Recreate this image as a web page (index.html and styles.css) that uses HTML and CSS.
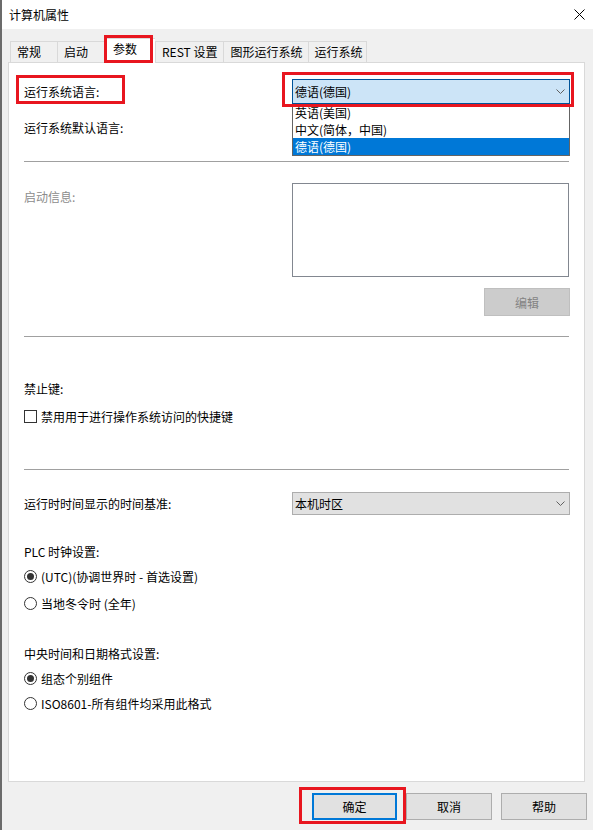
FILE: index.html
```html
<!DOCTYPE html>
<html lang="zh-CN">
<head>
<meta charset="utf-8">
<title>计算机属性</title>
<link rel="stylesheet" href="styles.css">
</head>
<body>
<div class="window">
  <div class="titlebar">
    <span class="title">计算机属性</span>
    <svg class="close" width="11" height="11" viewBox="0 0 11 11"><path d="M0.5 0.5 L10.5 10.5 M10.5 0.5 L0.5 10.5" stroke="#000" stroke-width="1" fill="none"/></svg>
  </div>

  <div class="tabs">
    <div class="tab">常规</div>
    <div class="tab">启动</div>
    <div class="tab active">参数<span class="mark mark-tab"></span></div>
    <div class="tab">REST 设置</div>
    <div class="tab">图形运行系统</div>
    <div class="tab last">运行系统</div>
  </div>

  <div class="panel">
    <div class="row row-lang">
      <span class="label">运行系统语言:</span>
      <div class="combo open">
        <span>德语(德国)</span>
        <svg class="chev" width="9" height="5" viewBox="0 0 9 5"><path d="M0.5 0.5 L4.5 4.5 L8.5 0.5" stroke="#606060" stroke-width="1" fill="none"/></svg>
        <ul class="droplist">
          <li>英语(美国)</li>
          <li>中文(简体，中国)</li>
          <li class="sel">德语(德国)</li>
        </ul>
      </div>
      <span class="mark mark-label"></span>
      <span class="mark mark-combo"></span>
    </div>
    <div class="row row-default">
      <span class="label">运行系统默认语言:</span>
    </div>

    <div class="sep sep-1"></div>

    <div class="startup">
      <span class="label disabled">启动信息:</span>
      <div class="textbox"></div>
    </div>
    <div class="edit-row">
      <button class="btn btn-disabled">编辑</button>
    </div>

    <div class="sep sep-2"></div>

    <div class="heading heading-keys">禁止键:</div>
    <div class="check">
      <span class="box"></span>
      <span>禁用用于进行操作系统访问的快捷键</span>
    </div>

    <div class="sep sep-3"></div>

    <div class="row row-time">
      <span class="label">运行时时间显示的时间基准:</span>
      <div class="combo">
        <span>本机时区</span>
        <svg class="chev" width="9" height="5" viewBox="0 0 9 5"><path d="M0.5 0.5 L4.5 4.5 L8.5 0.5" stroke="#606060" stroke-width="1" fill="none"/></svg>
      </div>
    </div>

    <div class="line line-plc">PLC 时钟设置:</div>
    <div class="line radio-row"><span class="radio on"></span><span>(UTC)(协调世界时 - 首选设置)</span></div>
    <div class="line radio-row radio-gap"><span class="radio"></span><span>当地冬令时 (全年)</span></div>

    <div class="line line-fmt">中央时间和日期格式设置:</div>
    <div class="line radio-row"><span class="radio on"></span><span>组态个别组件</span></div>
    <div class="line radio-row"><span class="radio"></span><span>ISO8601-所有组件均采用此格式</span></div>
  </div>

  <div class="buttons">
    <div class="btn-wrap">
      <button class="btn btn-default">确定</button>
      <span class="mark mark-ok"></span>
    </div>
    <button class="btn">取消</button>
    <button class="btn">帮助</button>
  </div>
</div>
</body>
</html>
```

FILE: styles.css
```css
* {
  box-sizing: border-box;
}

html,
body {
  margin: 0;
  padding: 0;
}

body {
  width: 593px;
  height: 830px;
  overflow: hidden;
  background: #f0f0f0;
  font-family: "Noto Sans CJK SC", "Microsoft YaHei", sans-serif;
  font-size: 12px;
  color: #000;
}

.window {
  width: 593px;
  height: 830px;
  border-left: 2px solid #6b6b6b;
  background: #f0f0f0;
}

/* title bar */
.titlebar {
  height: 29px;
  background: #fff;
  display: flex;
  align-items: center;
  justify-content: space-between;
  padding: 0 8px 1px 7px;
}

.title {
  line-height: 17px;
}

.close {
  display: block;
}

/* tabs */
.tabs {
  display: flex;
  align-items: flex-end;
  height: 21px;
  margin: 12px 0 0 8px;
}

.tab {
  height: 21px;
  min-width: 47px;
  padding: 0 6px;
  border: 1px solid #d9d9d9;
  border-right: none;
  border-bottom: none;
  line-height: 20px;
  white-space: nowrap;
}

.tab.last {
  border-right: 1px solid #d9d9d9;
  padding: 0 4px 0 5px;
}

.tab.active {
  position: relative;
  z-index: 2;
  background: #fff;
  height: 25px;
  min-width: 51px;
  margin-bottom: -1px;
  padding-left: 8px;
}

/* annotation marks */
.mark {
  position: absolute;
  border: 3px solid #e8161f;
  pointer-events: none;
  z-index: 5;
}

.mark-tab {
  left: -1px;
  top: -4px;
  width: 49px;
  height: 28px;
}

.mark-label {
  left: -8px;
  top: -4px;
  width: 109px;
  height: 29px;
}

.mark-combo {
  left: 258px;
  top: -7px;
  width: 292px;
  height: 35px;
}

.mark-ok {
  left: -13px;
  top: -6px;
  width: 107px;
  height: 37px;
}

/* panel */
.panel {
  position: relative;
  width: 577px;
  height: 720px;
  margin-left: 6px;
  background: #fff;
  border: 1px solid #d9d9d9;
  padding: 16px 14px 0 15px;
}

.label {
  line-height: 17px;
  white-space: nowrap;
}

.label.disabled {
  color: #8c8c8c;
}

.row {
  position: relative;
  display: grid;
  grid-template-columns: 268px 1fr;
  align-items: center;
  height: 23px;
}

.row-lang {
  height: 25px;
}

.row-default {
  margin-top: 12px;
}

.row-time {
  margin-top: 22px;
}

.combo {
  position: relative;
  height: 100%;
  border: 1px solid #adadad;
  background: #e1e1e1;
  display: flex;
  align-items: center;
  justify-content: space-between;
  padding: 0 4px 0 2px;
  line-height: 17px;
}

.combo.open {
  background: #cce4f7;
  border-color: #005499;
}

.chev {
  display: block;
}

.droplist {
  position: absolute;
  left: -1px;
  right: -1px;
  top: calc(100% + 1px);
  margin: 0;
  padding: 0;
  list-style: none;
  background: #fff;
  border: 1px solid #646464;
  border-top: none;
  z-index: 3;
}

.droplist li {
  height: 17px;
  line-height: 17px;
  padding-left: 2px;
  white-space: nowrap;
}

.droplist li.sel {
  background: #0078d7;
  color: #fff;
}

.sep {
  height: 1px;
  background: #a0a0a0;
  margin-right: 1px;
}

.sep-1 {
  margin-top: 22px;
}

.sep-2 {
  margin-top: 20px;
}

.sep-3 {
  margin-top: 44px;
}

.startup {
  display: grid;
  grid-template-columns: 268px 1fr;
  align-items: start;
  margin-top: 21px;
}

.startup .label {
  margin-top: 5px;
}

.textbox {
  height: 94px;
  border: 1px solid #828790;
  margin-right: 1px;
  background: #fff;
}

.edit-row {
  display: flex;
  justify-content: flex-end;
  margin-top: 11px;
}

.btn {
  font-family: inherit;
  font-size: 12px;
  color: #000;
  width: 86px;
  height: 27px;
  margin: 0;
  padding: 0;
  background: #e1e1e1;
  border: 1px solid #adadad;
  line-height: 17px;
}

.btn-disabled {
  height: 28px;
  background: #cccccc;
  border-color: #bfbfbf;
  color: #838383;
}

.heading {
  line-height: 17px;
}

.heading-keys {
  margin-top: 43px;
}

.check {
  display: flex;
  align-items: center;
  gap: 4px;
  height: 17px;
  margin-top: 11px;
  line-height: 17px;
}

.box {
  width: 13px;
  height: 13px;
  border: 1px solid #333;
  background: #fff;
}

.line {
  height: 25px;
  line-height: 25px;
  white-space: nowrap;
}

.line-plc {
  margin-top: 24px;
}

.line-fmt {
  margin-top: 25px;
}

.radio-row {
  display: flex;
  align-items: center;
  gap: 4px;
}

.radio-gap {
  margin-top: 2px;
}

.radio {
  width: 13px;
  height: 13px;
  border: 1px solid #333;
  border-radius: 50%;
  background: #fff;
  display: flex;
  align-items: center;
  justify-content: center;
  flex: none;
}

.radio.on::after {
  content: "";
  width: 7px;
  height: 7px;
  border-radius: 50%;
  background: #333;
}

/* bottom buttons */
.buttons {
  display: flex;
  justify-content: flex-end;
  gap: 9px;
  margin-top: 11px;
  padding-right: 6px;
}

.btn-wrap {
  position: relative;
  display: flex;
}

.btn-default {
  width: 85px;
  border: 2px solid #0078d7;
}
```
